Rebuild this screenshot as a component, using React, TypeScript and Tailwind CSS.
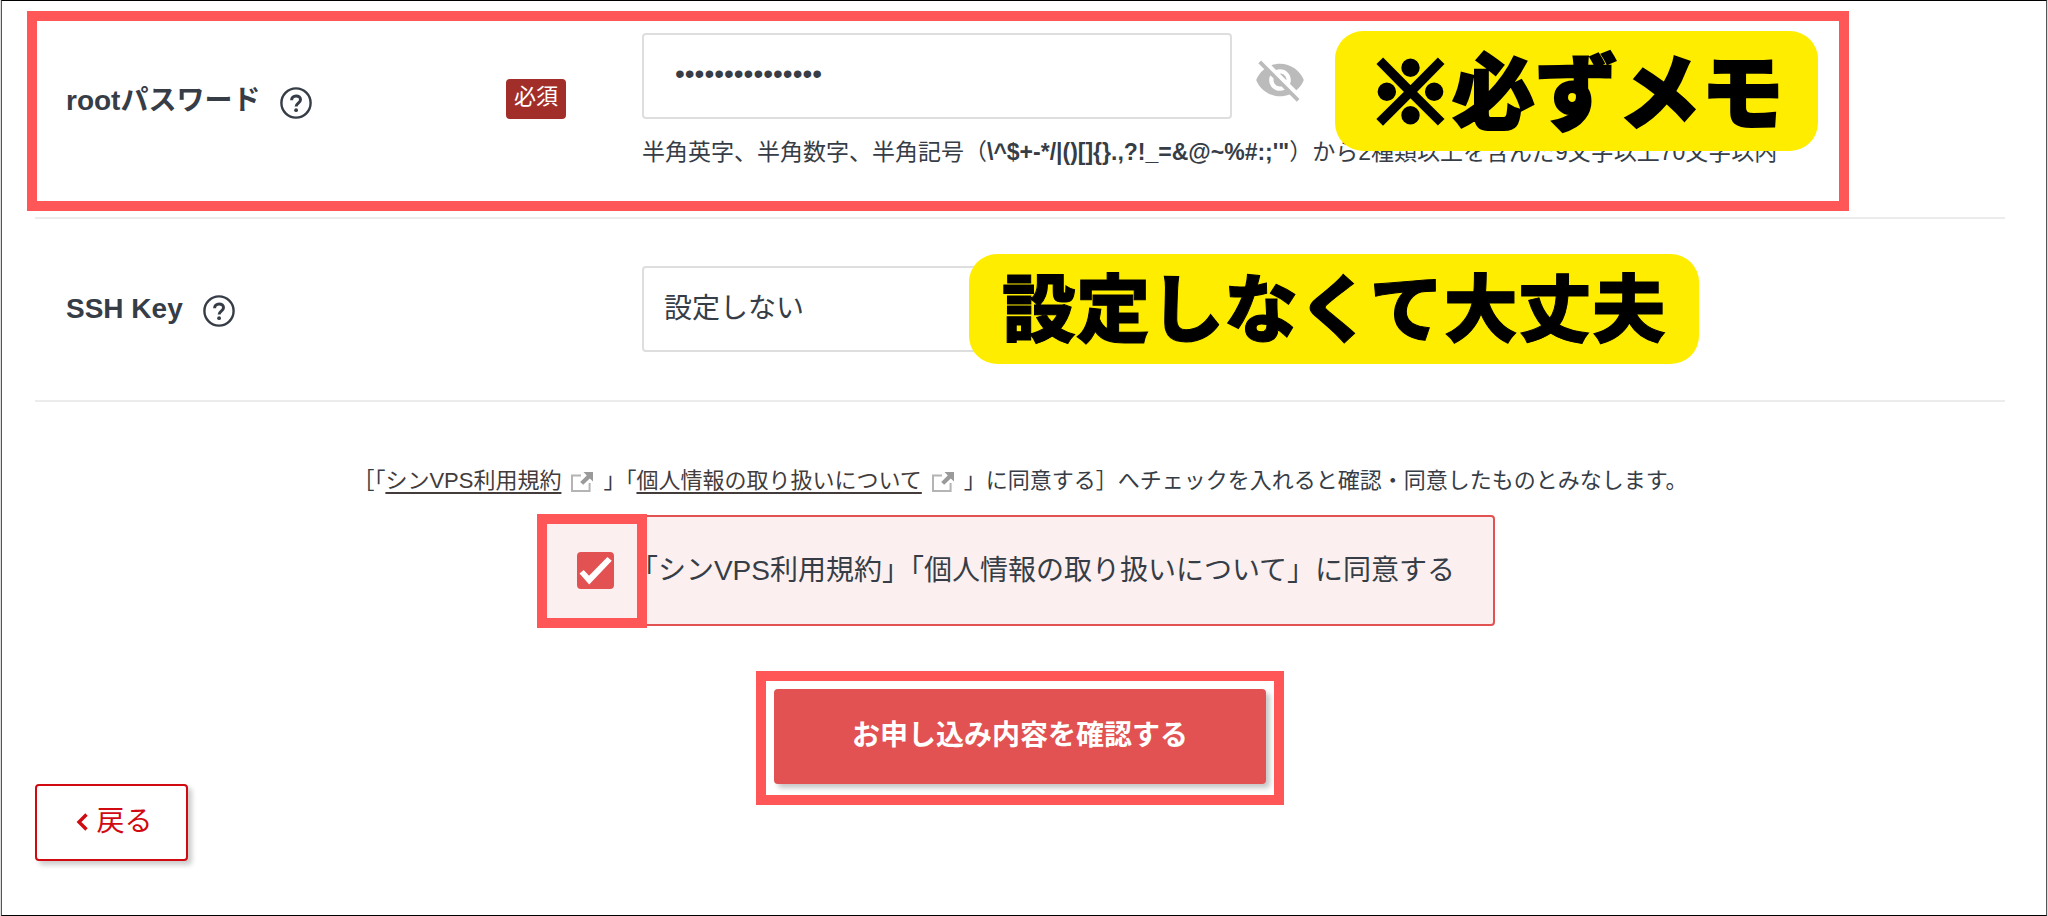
import React, { useState } from 'react';
import { MdVisibility, MdVisibilityOff } from 'react-icons/md';

function HelpIcon() {
  return (
    <svg viewBox="0 0 32 32" className="size-8" fill="none" aria-hidden="true">
      <circle cx="16" cy="16" r="14.6" stroke="currentColor" strokeWidth="2.4" />
      <path d="M11.6 13.2c0-2.6 1.9-4.3 4.5-4.3s4.4 1.6 4.4 3.9c0 3-4.4 3.6-4.4 6.6" stroke="currentColor" strokeWidth="3" />
      <circle cx="16.1" cy="23.2" r="1.9" fill="currentColor" />
    </svg>
  );
}

function ExternalIcon() {
  return (
    <svg viewBox="0 0 22 20" className="mx-2.5 inline h-5 w-[22px] align-[-4px]" fill="none" aria-hidden="true">
      <path d="M10 3.6H1V19h17.6v-8" stroke="#b4b4b4" strokeWidth="2" />
      <path d="M12.5 0H22v9.5l-3.2-3-6.6 6.3-3-2.9 6.6-6.4z" fill="#9a9a9a" />
    </svg>
  );
}

function Row({ id, label, required, children }: { id: string; label: string; required?: boolean; children: React.ReactNode }) {
  return (
    <div className="grid grid-cols-[500px_1fr] items-center gap-[76px] pl-[31px]">
      <div className="flex items-center justify-between">
        <div className="flex items-center gap-5">
          <label htmlFor={id} className="text-[28px] leading-9 font-bold">{label}</label>
          <button type="button" aria-label={`${label}のヘルプ`} className="pt-1">
            <HelpIcon />
          </button>
        </div>
        {required && (
          <span className="mb-1 rounded bg-[#a22e29] px-2 pt-0.5 pb-1.5 text-[22px] leading-8 text-white">必須</span>
        )}
      </div>
      <div className="relative">{children}</div>
    </div>
  );
}

export default function App() {
  const [password, setPassword] = useState('Shin-VPS_root#1');
  const [visible, setVisible] = useState(false);
  const [agreed, setAgreed] = useState(true);

  return (
    <div className="flex min-h-screen bg-[#dcdcdc] px-px font-['Liberation_Sans','Noto_Sans_CJK_JP',sans-serif] text-[#363d46]">
      <main lang="ja" className="flex-1 border border-x-[#555] border-y-black bg-white pr-[41px] pl-[33px]">
        <form onSubmit={(e) => e.preventDefault()}>
          <div className="relative border-b-2 border-[#ececec] pt-8 pb-12">
            <Row id="root-password" label="rootパスワード" required>
              <div className="flex items-center gap-[22px]">
                <input
                  id="root-password"
                  type={visible ? 'text' : 'password'}
                  value={password}
                  onChange={(e) => setPassword(e.target.value)}
                  className="h-[86px] w-[590px] rounded border-2 border-[#dedede] px-[31px] pb-1 text-[28px] focus:outline-none"
                />
                <button
                  type="button"
                  aria-label="パスワードを表示"
                  onClick={() => setVisible(!visible)}
                  className="pt-2 text-[#bbb]"
                >
                  {visible ? <MdVisibility size={52} /> : <MdVisibilityOff size={52} />}
                </button>
              </div>
              <p className="mt-4 text-[23px] leading-[34px]">
                半角英字、半角数字、半角記号（<b>{`\\^$+-*/|()[]{}.,?!_=&@~%#:;'"`}</b>）から2種類以上を含んだ9文字以上70文字以内
              </p>
              <div className="absolute -top-0.5 left-[693px] rounded-[28px] bg-[#ffed00] px-[34px] pt-1.5 pb-3.5 font-['Noto_Sans_CJK_JP',sans-serif] text-[83px] leading-[100px] font-black whitespace-nowrap text-black [-webkit-text-stroke:2px_#000]">
                <span className="[-webkit-text-stroke:6px_#000]">※</span>必ずメモ
              </div>
            </Row>
            <div className="pointer-events-none absolute top-2.5 right-[156px] bottom-1.5 -left-2 border-10 border-[#ff5757]" />
          </div>

          <div className="border-b-2 border-[#ececec] pt-[47px] pb-12">
            <Row id="ssh-key" label="SSH Key">
              <select
                id="ssh-key"
                className="block h-[86px] w-[590px] appearance-none rounded border-2 border-[#dedede] px-5 text-[28px] focus:outline-none"
              >
                <option>設定しない</option>
              </select>
              <div className="absolute -top-3 left-[327px] rounded-[28px] bg-[#ffed00] px-[33px] pb-2.5 font-['Noto_Sans_CJK_JP',sans-serif] text-[74px] leading-[100px] font-black whitespace-nowrap text-black [-webkit-text-stroke:1px_#000]">
                設定しなくて大丈夫
              </div>
            </Row>
          </div>

          <div className="flex flex-col items-center pt-[63px]">
            <p className="text-[22px] leading-8">
              ［「<a href="#terms" className="text-[#433c3a] underline underline-offset-4">シンVPS利用規約</a>
              <ExternalIcon />」「<a href="#privacy" className="text-[#433c3a] underline underline-offset-4">個人情報の取り扱いについて</a>
              <ExternalIcon />」に同意する］へチェックを入れると確認・同意したものとみなします。
            </p>

            <label className="relative mt-[18px] flex items-center gap-4 rounded border-2 border-[#e25252] bg-[#fbf0ef] py-[35px] pr-[38px] pl-[30px] text-[28px] leading-[37px]">
              <input
                type="checkbox"
                checked={agreed}
                onChange={(e) => setAgreed(e.target.checked)}
                className="size-[37px] appearance-none rounded border-2 border-[#e25252] bg-white checked:bg-[#e25252]"
              />
              {agreed && (
                <svg viewBox="0 0 37 37" className="pointer-events-none absolute left-[30px] size-[37px]" fill="#fff" aria-hidden="true">
                  <path d="M2.5 21.5l4.2-3.5 5.3 5.8L30.4 5l4.4 3.8L12.2 32.5z" />
                </svg>
              )}
              「シンVPS利用規約」「個人情報の取り扱いについて」に同意する
              <span className="pointer-events-none absolute -top-[3px] -left-2.5 h-[114px] w-[110px] border-10 border-[#ff5757]" />
            </label>

            <div className="mt-[45px] border-10 border-[#ff5757] px-2 pt-2 pb-[11px]">
              <button
                type="submit"
                className="block h-[95px] w-[492px] rounded bg-[#e25252] pb-0.5 text-[28px] font-bold text-white shadow-[4px_4px_5px_rgba(0,0,0,0.22)]"
              >
                お申し込み内容を確認する
              </button>
            </div>
          </div>

          <button
            type="button"
            className="-mt-[21px] flex h-[77px] w-[153px] items-center justify-center gap-2 rounded border-2 border-[#d00a10] bg-white pb-0.5 pl-1.5 text-[28px] text-[#d00a10] shadow-[4px_4px_5px_rgba(0,0,0,0.2)]"
          >
            <svg viewBox="0 0 12 18" className="h-[18px] w-3" fill="none" aria-hidden="true">
              <path d="M10.5 1.5L3 9l7.5 7.5" stroke="currentColor" strokeWidth="3.4" />
            </svg>
            戻る
          </button>
        </form>
      </main>
    </div>
  );
}
